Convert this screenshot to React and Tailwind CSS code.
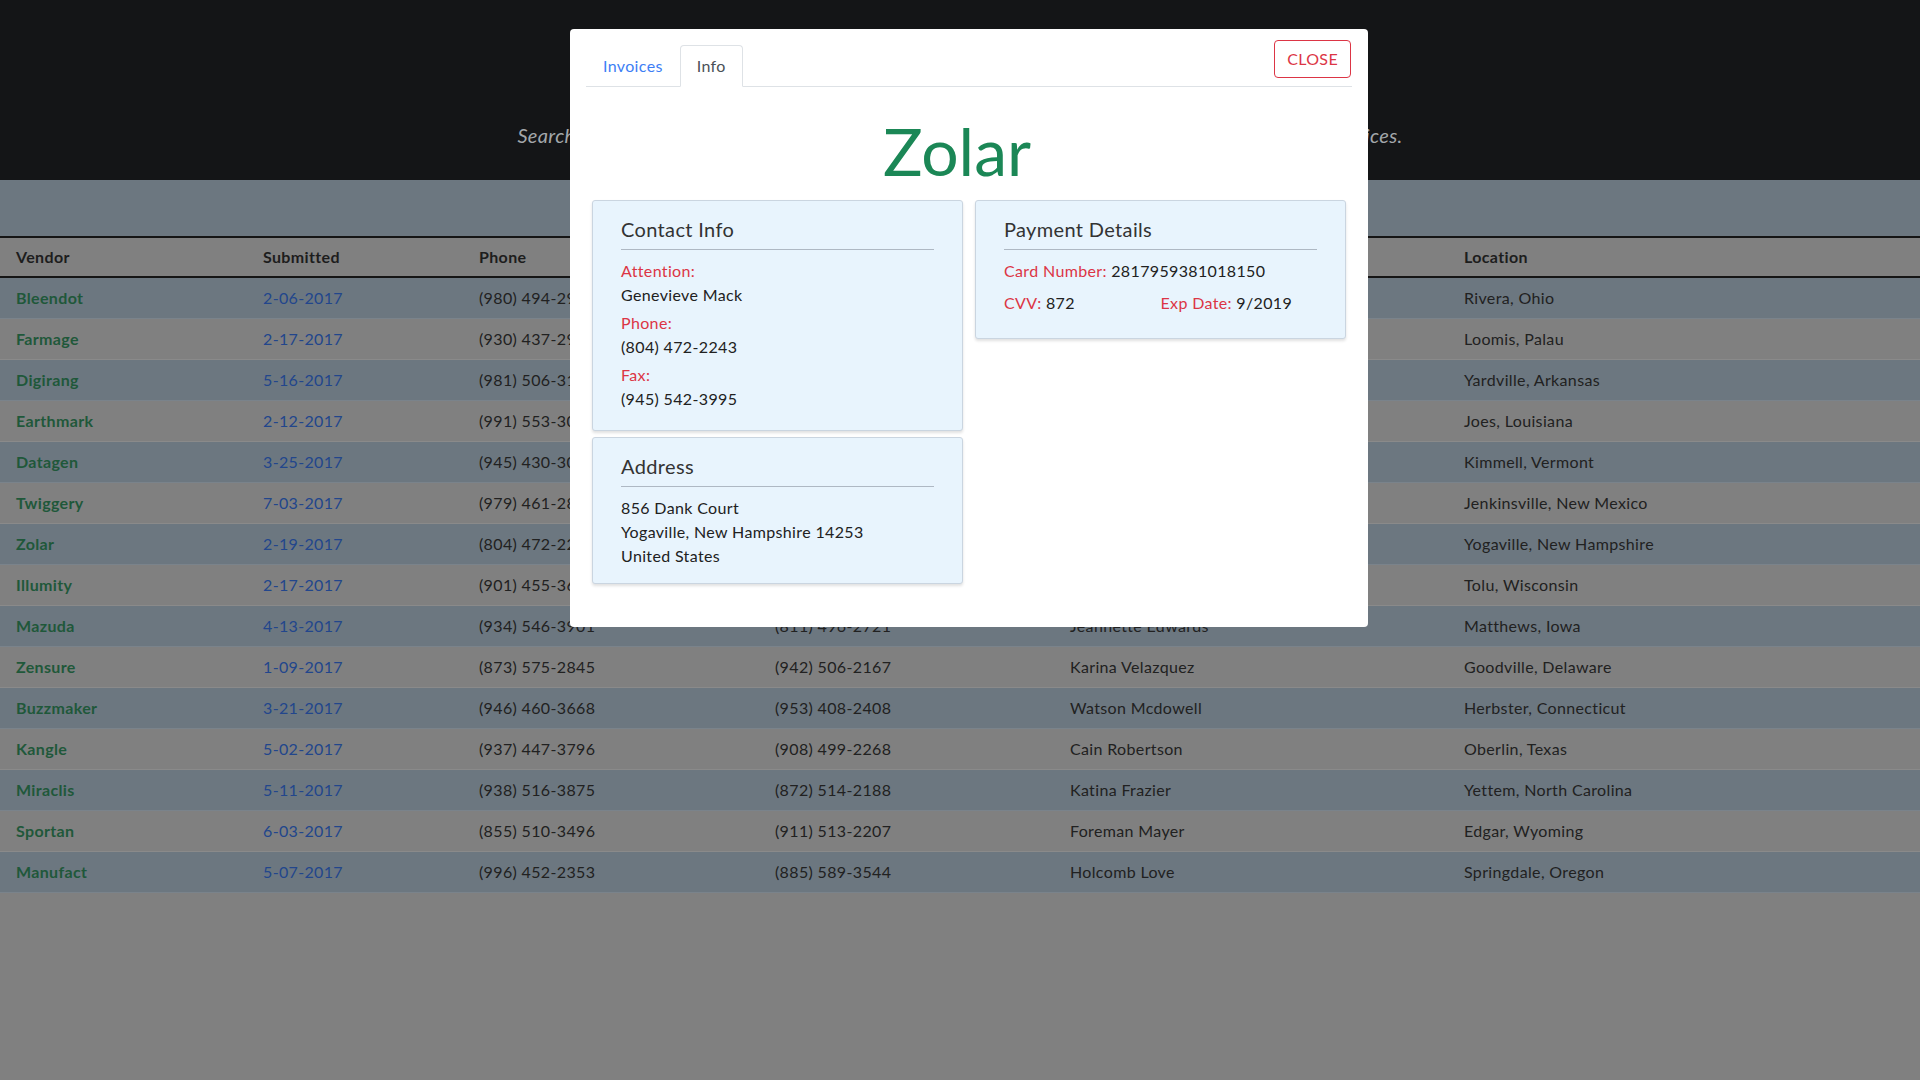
import React from "react";

const rows = [
  ["Bleendot", "2-06-2017", "(980) 494-2913", "(912) 437-2281", "Marsh Pittman", "Rivera, Ohio"],
  ["Farmage", "2-17-2017", "(930) 437-2950", "(828) 539-3381", "Lott Hebert", "Loomis, Palau"],
  ["Digirang", "5-16-2017", "(981) 506-3172", "(862) 404-2637", "Rosalie Odom", "Yardville, Arkansas"],
  ["Earthmark", "2-12-2017", "(991) 553-3017", "(837) 589-3456", "Dale Gentry", "Joes, Louisiana"],
  ["Datagen", "3-25-2017", "(945) 430-3042", "(898) 442-2619", "Mabel Snider", "Kimmell, Vermont"],
  ["Twiggery", "7-03-2017", "(979) 461-2830", "(871) 561-2730", "Tessa Bird", "Jenkinsville, New Mexico"],
  ["Zolar", "2-19-2017", "(804) 472-2243", "(945) 542-3995", "Genevieve Mack", "Yogaville, New Hampshire"],
  ["Illumity", "2-17-2017", "(901) 455-3655", "(833) 461-2052", "Lessie Frost", "Tolu, Wisconsin"],
  ["Mazuda", "4-13-2017", "(934) 546-3901", "(811) 496-2721", "Jeannette Edwards", "Matthews, Iowa"],
  ["Zensure", "1-09-2017", "(873) 575-2845", "(942) 506-2167", "Karina Velazquez", "Goodville, Delaware"],
  ["Buzzmaker", "3-21-2017", "(946) 460-3668", "(953) 408-2408", "Watson Mcdowell", "Herbster, Connecticut"],
  ["Kangle", "5-02-2017", "(937) 447-3796", "(908) 499-2268", "Cain Robertson", "Oberlin, Texas"],
  ["Miraclis", "5-11-2017", "(938) 516-3875", "(872) 514-2188", "Katina Frazier", "Yettem, North Carolina"],
  ["Sportan", "6-03-2017", "(855) 510-3496", "(911) 513-2207", "Foreman Mayer", "Edgar, Wyoming"],
  ["Manufact", "5-07-2017", "(996) 452-2353", "(885) 589-3544", "Holcomb Love", "Springdale, Oregon"],
];

const cols = "grid grid-cols-[247px_216px_296px_295px_394px_1fr]";

function Card({ title, children }) {
  return (
    <div className="bg-[#e8f4fd] border border-[#cad5e0] rounded-[3px] shadow-[0_2px_3px_rgba(0,0,0,0.12)] px-[28px] pt-4 pb-[15px]">
      <h3 className="text-[20px] leading-6 text-[#333]">{title}</h3>
      <div className="h-px bg-[#aeb8c3] mt-2 mb-[9px]" />
      {children}
    </div>
  );
}

export default function App() {
  return (
    <div className="relative min-h-screen bg-[#808080] font-[family-name:Lato,sans-serif] tracking-[0.35px] text-[16px] text-[#212121]">
      {/* page header */}
      <div className="h-[180px] bg-[#141517] flex flex-col justify-end items-center pb-[30px]">
        <p className="text-[20px] italic text-[#a3a7ab]">
          Search vendors by name, date, phone, fax, contact person or location below to view all of their invoices.
        </p>
      </div>
      <div className="h-[56px] bg-[#6c7780]" />

      {/* vendor table */}
      <div className={`${cols} h-[42px] items-center border-t-2 border-b-2 border-[#151515] font-bold text-[#1d1d1d]`}>
        <div className="pl-4">Vendor</div>
        <div className="pl-4">Submitted</div>
        <div className="pl-4">Phone</div>
        <div className="pl-4">Fax</div>
        <div className="pl-4">Contact</div>
        <div className="pl-4">Location</div>
      </div>
      {rows.map((r, i) => (
        <div
          key={r[0]}
          className={`${cols} h-[41px] items-center border-b ${
            i % 2 === 0 ? "bg-[#6c7780] border-[#7a838b]" : "bg-[#808080] border-[#8a8a8a]"
          }`}
        >
          <div className="pl-4 font-bold text-[#1f583a]">{r[0]}</div>
          <div className="pl-4 text-[#22468c]">{r[1]}</div>
          <div className="pl-4">{r[2]}</div>
          <div className="pl-4">{r[3]}</div>
          <div className="pl-4">{r[4]}</div>
          <div className="pl-4">{r[5]}</div>
        </div>
      ))}

      {/* vendor modal */}
      <div className="absolute left-[570px] top-[29px] w-[798px] h-[598px] bg-white rounded-[4px] p-4">
        <div className="flex justify-between items-start border-b border-[#dee2e6]">
          <ul className="flex -mb-px">
            <li className="px-4 py-2 leading-6 text-[#3d7ef5] border border-transparent">Invoices</li>
            <li className="px-4 py-2 leading-6 text-[#495057] bg-white border border-[#dee2e6] border-b-white rounded-t-[4px]">
              Info
            </li>
          </ul>
          <button className="-mt-[5px] mr-px px-3 py-1.5 leading-6 border border-[#dc3545] text-[#dc3545] rounded-[4px]">
            CLOSE
          </button>
        </div>

        <h1 className="mt-6 pr-6 text-center text-[66px] leading-[1.2] tracking-normal text-[#1b8756]">Zolar</h1>

        <div className="mt-[10px] grid grid-cols-2">
          <div className="mx-[6px] flex flex-col gap-[6px]">
            <Card title="Contact Info">
              <div className="mb-1">
                <div className="text-[#dc3545] leading-6">Attention:</div>
                <div className="leading-6">Genevieve Mack</div>
              </div>
              <div className="mb-1">
                <div className="text-[#dc3545] leading-6">Phone:</div>
                <div className="leading-6">(804) 472-2243</div>
              </div>
              <div className="mb-1">
                <div className="text-[#dc3545] leading-6">Fax:</div>
                <div className="leading-6">(945) 542-3995</div>
              </div>
            </Card>
            <Card title="Address">
              <div className="leading-6">856 Dank Court</div>
              <div className="leading-6">Yogaville, New Hampshire 14253</div>
              <div className="leading-6">United States</div>
            </Card>
          </div>
          <div className="mx-[6px]">
            <Card title="Payment Details">
              <div className="leading-6 mb-2">
                <span className="text-[#dc3545]">Card Number:</span> 2817959381018150
              </div>
              <div className="grid grid-cols-2 leading-6 mb-2">
                <div>
                  <span className="text-[#dc3545]">CVV:</span> 872
                </div>
                <div>
                  <span className="text-[#dc3545]">Exp Date:</span> 9/2019
                </div>
              </div>
            </Card>
          </div>
        </div>
      </div>
    </div>
  );
}
